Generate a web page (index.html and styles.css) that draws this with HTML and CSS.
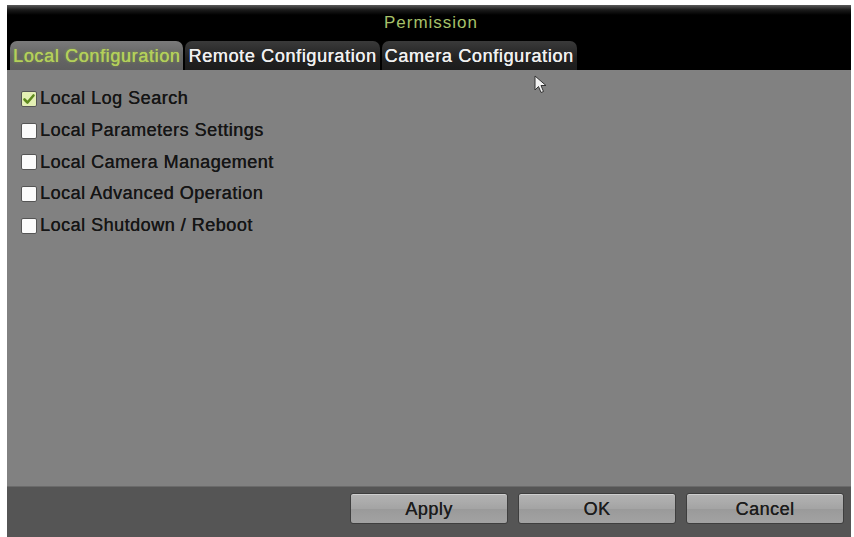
FILE: index.html
```html
<!DOCTYPE html>
<html>
<head>
<meta charset="utf-8">
<link rel="stylesheet" href="styles.css">
</head>
<body>
<div class="dialog">
  <div class="titlebar">Permission</div>
  <div class="tabs">
    <div class="tab active">Local Configuration</div>
    <div class="tab">Remote Configuration</div>
    <div class="tab">Camera Configuration</div>
  </div>
  <div class="content">
    <label class="row"><span class="box checked"><svg viewBox="0 0 14 14" width="14" height="14"><path d="M2.5 7.5 L5.5 10.5 L11.5 3.5" fill="none" stroke="#5e8a1e" stroke-width="2.6" stroke-linecap="round" stroke-linejoin="round"/></svg></span>Local Log Search</label>
    <label class="row"><span class="box"></span>Local Parameters Settings</label>
    <label class="row"><span class="box"></span>Local Camera Management</label>
    <label class="row"><span class="box"></span>Local Advanced Operation</label>
    <label class="row"><span class="box"></span>Local Shutdown / Reboot</label>
    <svg class="cursor" viewBox="0 0 14 20" width="14" height="20"><path d="M1 1 L1 15 L4.5 11.5 L7 17.5 L9.5 16.5 L7 10.5 L12 10.5 Z" fill="#f2f2f2" stroke="#333" stroke-width="1"/></svg>
  </div>
  <div class="footer">
    <button class="btn">Apply</button>
    <button class="btn">OK</button>
    <button class="btn">Cancel</button>
  </div>
</div>
</body>
</html>
```
FILE: styles.css
```css
html, body {
  margin: 0;
  padding: 0;
  background: #ffffff;
}
body {
  font-family: "Liberation Sans", Arial, sans-serif;
}
.dialog {
  margin: 5px 3px 0 7px;
  height: 532px;
  display: flex;
  flex-direction: column;
  background: #818181;
  overflow: hidden;
}
.titlebar {
  height: 35px;
  flex: none;
  background: linear-gradient(#5a5a5a 0px, #1a1a1a 5px, #000 10px, #000 100%);
  color: #a6c16a;
  font-size: 17px;
  letter-spacing: 1px;
  display: flex;
  align-items: center;
  justify-content: center;
  padding: 0 0 0 4px;
  box-sizing: border-box;
}
.tabs {
  height: 30px;
  flex: none;
  background: #000;
  display: flex;
  align-items: flex-end;
  padding-left: 3px;
  gap: 2px;
}
.tab {
  height: 29px;
  padding: 2px 3px 0 3px;
  display: flex;
  align-items: center;
  border-radius: 7px 7px 0 0;
  background: linear-gradient(#3a3a3a, #222 60%, #1c1c1c);
  color: #f0f0f0;
  font-size: 18px;
  letter-spacing: 0.65px;
  text-shadow: 0.3px 0 0 currentColor;
  box-sizing: border-box;
}
.tab.active {
  background: linear-gradient(#7a7a7a, #666 50%, #5e5e5e);
  color: #b4d05a;
  text-shadow: 0.3px 0 0 currentColor, 0 0 3px rgba(150, 190, 60, 0.6);
}
.content {
  flex: 1;
  position: relative;
  padding: 13px 0 0 14px;
  display: flex;
  flex-direction: column;
}
.row {
  height: 31.7px;
  display: flex;
  align-items: center;
  font-size: 18px;
  color: #151515;
  letter-spacing: 0.5px;
  text-shadow: 0.3px 0 0 currentColor;
}
.box {
  width: 14px;
  height: 14px;
  margin-right: 3px;
  background: #fbfbfb;
  border: 1px solid #555;
  border-radius: 2px;
  display: flex;
  align-items: center;
  justify-content: center;
  flex: none;
}
.box.checked {
  background: #e4f0b4;
}
.cursor {
  position: absolute;
  left: 527px;
  top: 5px;
}
.footer {
  height: 51px;
  flex: none;
  background: #555555;
  border-top: 1px solid #6a6a6a;
  box-sizing: border-box;
  display: flex;
  justify-content: flex-end;
  align-items: flex-start;
  padding: 6px 7px 0 0;
  gap: 10px;
}
.btn {
  width: 158px;
  height: 31px;
  border: 1px solid #3e3e3e;
  border-radius: 3px;
  background: linear-gradient(#b4b4b4, #a4a4a4 50%, #9a9a9a 52%, #a2a2a2);
  color: #1c1c1c;
  font-family: "Liberation Sans", Arial, sans-serif;
  font-size: 18px;
  letter-spacing: 0.5px;
  text-shadow: 0.3px 0 0 currentColor;
  padding: 2px 0 0 0;
  box-shadow: inset 0 1px 0 #cfcfcf;
}
```
